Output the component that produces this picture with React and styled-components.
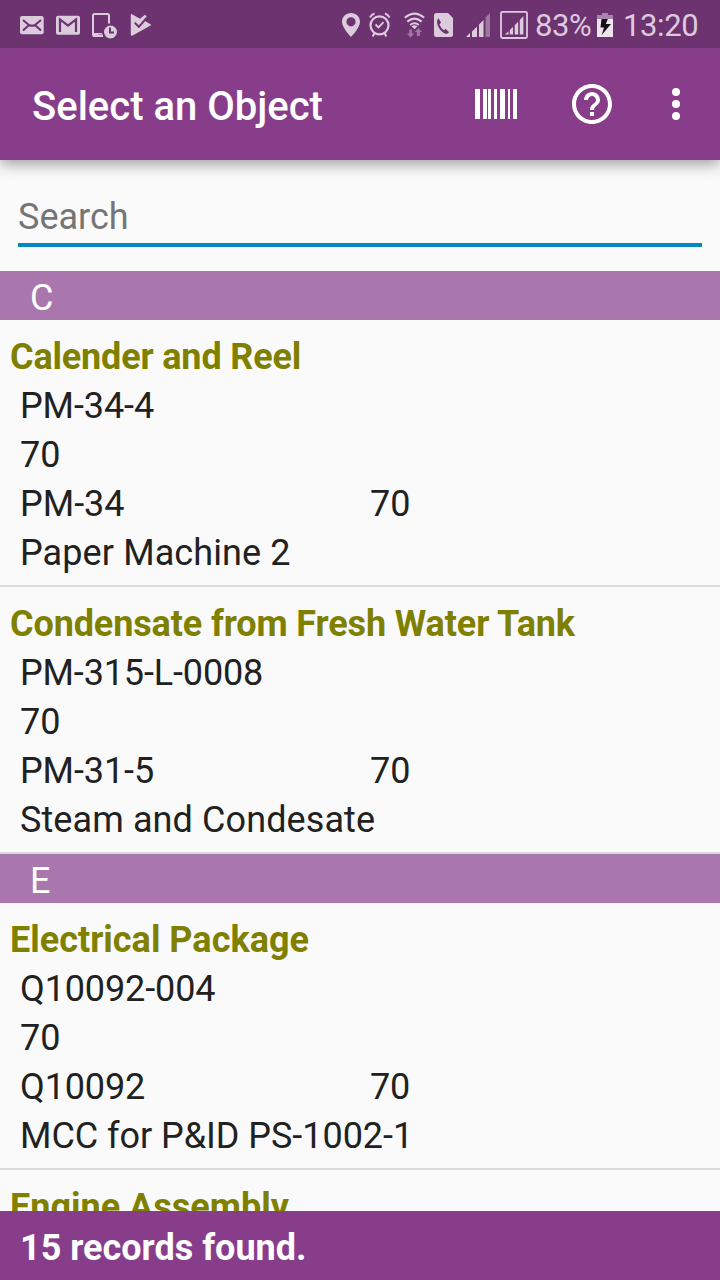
import React from "react";
import styled, { createGlobalStyle } from "styled-components";

const GlobalStyle = createGlobalStyle`
  * { box-sizing: border-box; }
  body {
    margin: 0;
    background: #fafafa;
    font-family: Roboto, "Liberation Sans", sans-serif;
  }
`;

const Screen = styled.div`
  width: 720px;
  height: 1280px;
  display: flex;
  flex-direction: column;
  overflow: hidden;
  background: #fafafa;
`;

const StatusBar = styled.div`
  flex: none;
  height: 48px;
  display: flex;
  align-items: flex-start;
  justify-content: space-between;
  padding: 10px 21px 0 20px;
  background: #6d3270;
  color: #dccadd;
  z-index: 2;
`;

const StatusGroup = styled.div`
  display: flex;
  align-items: flex-start;
`;

const StatusGlyph = styled.svg`
  flex: none;
  display: block;
  height: 30px;
  margin-left: ${(p) => p.$gap || 0}px;
  fill: currentColor;
`;

const StatusText = styled.span`
  width: ${(p) => p.$width}px;
  margin-left: ${(p) => p.$gap}px;
  font-size: 31px;
  line-height: 30px;
  letter-spacing: ${(p) => p.$track || 0}px;
  padding-top: 1px;
  white-space: nowrap;
`;

const AppBar = styled.header`
  flex: none;
  height: 112px;
  display: flex;
  align-items: center;
  padding: 0 20px 0 32px;
  background: #883d8b;
  color: #fff;
  box-shadow: 0 4px 14px rgba(0, 0, 0, 0.38);
  z-index: 1;
`;

const Title = styled.h1`
  flex: 1;
  margin: 0;
  padding-top: 6px;
  font-size: 40px;
  line-height: 48px;
  font-weight: 500;
`;

const ActionIcon = styled.svg`
  flex: none;
  display: block;
  margin-left: ${(p) => p.$gap || 0}px;
  fill: #fff;
`;

const SearchArea = styled.div`
  flex: none;
  height: 111px;
  padding: 32px 18px 0;
`;

const SearchField = styled.div`
  height: 55px;
  padding-top: 1px;
  border-bottom: 4px solid #0288c3;
  font-size: 36px;
  line-height: 49px;
  color: #757575;
`;

const List = styled.main`
  flex: 1;
  min-height: 0;
  overflow: hidden;
`;

const Line = styled.div`
  display: flex;
  height: 49px;
  padding: 3px 0 0 ${(p) => p.$indent}px;
  font-size: 36px;
  line-height: 49px;
  letter-spacing: ${(p) => p.$track || 0}px;
  white-space: nowrap;
`;

const SectionHeader = styled(Line)`
  background: #a977ae;
  color: #fff;
`;

const Item = styled.section`
  padding: 10px 0;
  border-bottom: 2px solid #dadada;
  color: #212121;
`;

const ItemTitle = styled(Line)`
  font-weight: 700;
  color: #808000;
`;

const Cell = styled.span`
  width: 350px;
`;

const Footer = styled.footer`
  flex: none;
  height: 69px;
  padding: 10px 0;
  background: #883d8b;
  color: #fff;
  font-weight: 700;
`;

const sections = [
  {
    letter: "C",
    items: [
      { name: "Calender and Reel", nameTrack: -0.17, code: "PM-34-4", codeTrack: -0.1, plant: "70", parent: "PM-34", parentPlant: "70", place: "Paper Machine 2", placeTrack: 0.1 },
      { name: "Condensate from Fresh Water Tank", nameTrack: -0.12, code: "PM-315-L-0008", codeTrack: -0.14, plant: "70", parent: "PM-31-5", parentTrack: -0.1, parentPlant: "70", place: "Steam and Condesate", placeTrack: 0.1 },
    ],
  },
  {
    letter: "E",
    items: [
      { name: "Electrical Package", code: "Q10092-004", codeTrack: -0.12, plant: "70", parent: "Q10092", parentTrack: -0.12, parentPlant: "70", place: "MCC for P&ID PS-1002-1", placeTrack: -0.04 },
      { name: "Engine Assembly" },
    ],
  },
];

function Notifications() {
  const cut = "#6d3270";
  return (
    <StatusGroup>
      <StatusGlyph width="24" viewBox="20 10 24 30">
        <rect x="20" y="16" width="23.7" height="18.2" rx="2" />
        <path d="M23 20l6 5-6 5.5M41 20l-6 5 6 5.5M29 25q3 1.6 6 0" fill="none" stroke={cut} strokeWidth="2" />
      </StatusGlyph>
      <StatusGlyph $gap={12} width="24" viewBox="56 10 24 30">
        <rect x="56" y="15.7" width="24" height="19" rx="2" />
        <path d="M60 32V19.5l8 6.2 8-6.2V32" fill="none" stroke={cut} strokeWidth="2.2" />
      </StatusGlyph>
      <StatusGlyph $gap={12} width="26" viewBox="92 10 26 30">
        <path d="M109 23.5V15.5q0-1.5-1.5-1.5H94.5q-1.5 0-1.5 1.5v19q0 1.5 1.5 1.5H103" fill="none" stroke="currentColor" strokeWidth="2" />
        <path d="M93 33h5v1.5h5V37H93z" />
        <path d="M98 33h4v1.2h-4z" />
        <circle cx="110.5" cy="32" r="6.500" />
        <path d="M110 27.500V32.500h4" fill="none" stroke={cut} strokeWidth="2" />
      </StatusGlyph>
      <StatusGlyph $gap={12} width="22" viewBox="130 10 22 30">
        <path d="M132 14.200L140 18.800L145 14.700L147.300 16.700L145 21L151 24.600L150.600 25.600L132.200 35.800Q130.800 36 130.800 34.600V15Q131 13.800 132 14.200z" />
        <path d="M134.700 22.800l4.200 4 8.600-10" fill="none" stroke={cut} strokeWidth="2" />
      </StatusGlyph>
    </StatusGroup>
  );
}

function SystemStatus() {
  const cut = "#6d3270";
  return (
    <StatusGroup>
      <StatusGlyph width="18" viewBox="342 10 18 30">
        <path fillRule="evenodd" d="M351 13c-5 0-9 3.800-9 8.800C342 28 351 37 351 37s9-9 9-15.200C360 16.800 356 13 351 13zm0 4.200a4.600 4.600 0 110 9.200 4.600 4.600 0 010-9.200z" />
      </StatusGlyph>
      <StatusGlyph $gap={9} width="22" viewBox="369 10 22 30">
        <g fill="none" stroke="currentColor">
          <circle cx="379.5" cy="25.300" r="9" strokeWidth="2.200" />
          <path d="M375.500 24.500l3 3 5-5.300" strokeWidth="1.900" />
          <path d="M370 17.500q1.500-3 4.500-4M389.500 17.500q-1.500-3-4.500-4M374.500 33l-1.800 3.500M384.500 33l1.800 3.500" strokeWidth="2" />
        </g>
      </StatusGlyph>
      <StatusGlyph $gap={13} width="22" viewBox="404 10 22 30">
        <g fill="none" stroke="currentColor" strokeWidth="2.100">
          <path d="M404.800 17.800q9.700-8.500 19.400 0" />
          <path d="M407.300 21.600q7.200-6 14.400 0" />
          <path d="M410.200 25q4.300-3.500 8.600 0" />
        </g>
        <path d="M411.500 26.300q3-2 6 0l-3 3z" />
        <path opacity=".45" d="M409.200 29.500h2.900v4h2.200L410.600 37.500l-3.700-4h2.300zM416.900 36v-4h-2.300l3.800-3.800 3.800 3.800h-2.300v4z" />
      </StatusGlyph>
      <StatusGlyph $gap={8} width="19" viewBox="434 10 19 30">
        <path d="M436.500 13H448l5 5v16.500q0 2.500-2.500 2.500h-14q-2.500 0-2.500-2.500v-19q0-2.500 2.500-2.500z" />
        <path fill={cut} d="M438.500 18.300l2.500 4.200-1.500 2q1.500 4 4.300 5.800l2-1.300 3.200 3.300q-1.500 1.700-3.300 1.500c-4-1-9-7.500-8.600-12.500q.2-2 1.400-3z" />
      </StatusGlyph>
      <StatusGlyph $gap={13} width="24" viewBox="466 10 24 30">
        <path d="M466 37l4-4v4zM472 31.500l5-5V37h-5zM479 24.500l4.500-4.500V37H479z" />
        <path opacity=".45" d="M485.500 17.500l4.500-4.500v24h-4.500z" />
      </StatusGlyph>
      <StatusGlyph $gap={9.5} width="28" viewBox="499.5 10 28 30">
        <rect x="500.5" y="11.800" width="26" height="26.200" rx="1.500" fill="none" stroke="currentColor" strokeWidth="1.800" />
        <path d="M504.500 34.500l3.500-3.200v3.200zM509.300 30l3.200-3v7.500h-3.200zM514.200 25.200l3.500-3.400v12.700h-3.500zM519.300 20l3.600-4v18.500h-3.600z" />
      </StatusGlyph>
      <StatusText $gap={7.5} $width={58} $track={-0.4}>83%</StatusText>
      <StatusGlyph $gap={4} width="16" viewBox="597 10 16 30">
        <path opacity=".55" d="M602 13h6v2h5v4h-16v-4h5z" />
        <path fill="#eee5ef" d="M597 19h16v18h-16z" />
        <path fill="#171018" d="M601.500 19h6.300l-2 5h5.200l-9.300 11 2.300-7.500h-3.500z" />
      </StatusGlyph>
      <StatusText $gap={10} $width={76} $track={-0.4}>13:20</StatusText>
    </StatusGroup>
  );
}

const bars = [
  [0, 5],
  [8, 4],
  [13, 3],
  [19, 3],
  [25, 5],
  [33, 2],
  [38, 4],
];

export default function App() {
  return (
    <Screen>
      <GlobalStyle />
      <StatusBar>
        <Notifications />
        <SystemStatus />
      </StatusBar>
      <AppBar>
        <Title>Select an Object</Title>
        <ActionIcon width="42" height="30" viewBox="0 0 42 30">
          {bars.map(([x, w]) => (
            <rect key={x} x={x} y="0" width={w} height="30" />
          ))}
        </ActionIcon>
        <ActionIcon $gap={51} width="48" height="48" viewBox="0 0 24 24">
          <path d="M11 18h2v-2h-2v2zm1-16C6.480 2 2 6.480 2 12s4.480 10 10 10 10-4.480 10-10S17.520 2 12 2zm0 18c-4.410 0-8-3.590-8-8s3.590-8 8-8 8 3.590 8 8-3.590 8-8 8zm0-14c-2.210 0-4 1.790-4 4h2c0-1.100.9-2 2-2s2 .9 2 2c0 2-3 1.750-3 5h2c0-2.250 3-2.500 3-5 0-2.210-1.790-4-4-4z" />
        </ActionIcon>
        <ActionIcon $gap={36} width="48" height="48" viewBox="0 0 24 24">
          <circle cx="12" cy="6" r="2" />
          <circle cx="12" cy="12" r="2" />
          <circle cx="12" cy="18" r="2" />
        </ActionIcon>
      </AppBar>
      <SearchArea>
        <SearchField>Search</SearchField>
      </SearchArea>
      <List>
        {sections.map((section) => (
          <React.Fragment key={section.letter}>
            <SectionHeader $indent={30}>{section.letter}</SectionHeader>
            {section.items.map((item) => (
              <Item key={item.name}>
                <ItemTitle $indent={10} $track={item.nameTrack}>{item.name}</ItemTitle>
                {item.code && (
                  <>
                    <Line $indent={20} $track={item.codeTrack}>{item.code}</Line>
                    <Line $indent={20}>{item.plant}</Line>
                    <Line $indent={20} $track={item.parentTrack}>
                      <Cell>{item.parent}</Cell>
                      <span>{item.parentPlant}</span>
                    </Line>
                    <Line $indent={20} $track={item.placeTrack}>{item.place}</Line>
                  </>
                )}
              </Item>
            ))}
          </React.Fragment>
        ))}
      </List>
      <Footer>
        <Line $indent={20}>15 records found.</Line>
      </Footer>
    </Screen>
  );
}
